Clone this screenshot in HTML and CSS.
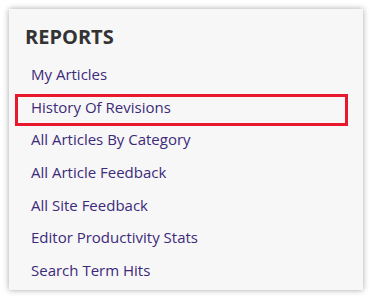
FILE: index.html
```html
<!DOCTYPE html>
<html lang="en">
<head>
    <meta charset="UTF-8">
    <meta name="viewport" content="width=device-width, initial-scale=1.0">
    <title>Reports</title>
    <link rel="stylesheet" href="styles.css">
</head>
<body>
    <div class="reports-box">
        <h2>REPORTS</h2>
        <ul class="report-list">
            <li><a href="#">My Articles</a></li>
            <li class="highlight"><a href="#">History Of Revisions</a></li>
            <li><a href="#">All Articles By Category</a></li>
            <li><a href="#">All Article Feedback</a></li>
            <li><a href="#">All Site Feedback</a></li>
            <li><a href="#">Editor Productivity Stats</a></li>
            <li><a href="#">Search Term Hits</a></li>
        </ul>
    </div>
</body>
</html>
```

FILE: styles.css
```css
body {
    margin: 0;
    padding: 9px;
    background: #fff;
    font-family: "Open Sans", "Liberation Sans", sans-serif;
}
.reports-box {
    width: 354px;
    background: #f7f7f7;
    box-shadow: 0 0 6px rgba(0,0,0,0.35);
    padding: 14px 0 0;
}
.reports-box h2 {
    margin: 0 0 11px;
    padding-left: 16px;
    font-size: 20px;
    line-height: 27px;
    font-weight: 700;
    color: #333;
}
.report-list {
    list-style: none;
    margin: 0 15px 0 6px;
    padding: 0;
}
.report-list li {
    padding: 2px 16px 8.67px;
    line-height: 22px;
    font-size: 15px;
}
.report-list a {
    color: #3c2a7a;
    text-decoration: none;
}
.report-list li.highlight {
    outline: 3px solid #e8192c;
    outline-offset: -3px;
}
```
